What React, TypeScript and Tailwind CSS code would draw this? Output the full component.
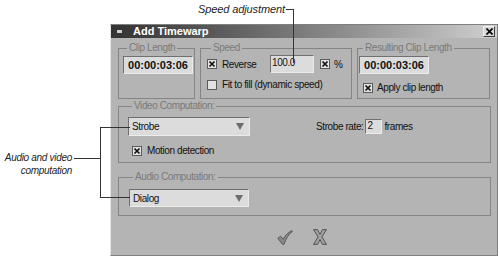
import type { ReactNode } from "react";

// Small pieces of the old-style dialog
function Check({ on }: { on?: boolean }) {
  return (
    <span className="flex h-[10px] w-[10px] shrink-0 items-center justify-center border border-[#5a5a5a] bg-[#e2e2e2]">
      {on && (
        <svg width="8" height="8" viewBox="0 0 8 8">
          <path d="M1.5 1.5L6.5 6.5M6.5 1.5L1.5 6.5" stroke="#111" strokeWidth="1.7" />
        </svg>
      )}
    </span>
  );
}

function Group({ title, className, children }: { title: string; className: string; children?: ReactNode }) {
  return (
    <fieldset className={"border border-[#858585] " + className}>
      <legend className="ml-[4px] px-[2px] text-[10px] leading-[12px] tracking-[-0.4px] text-[#7a7a7a]">
        {title}
      </legend>
      {children}
    </fieldset>
  );
}

function Box({ className, children }: { className: string; children?: ReactNode }) {
  return (
    <div
      className={
        "flex border border-t-[#707070] border-l-[#707070] border-b-[#ececec] border-r-[#ececec] bg-[#dcdcdc] " +
        className
      }
    >
      {children}
    </div>
  );
}

function Select({ value, className }: { value: string; className: string }) {
  return (
    <Box className={"items-center justify-between pl-[3px] pr-[5px] " + className}>
      <span>{value}</span>
      <svg width="8" height="7" viewBox="0 0 8 7">
        <path d="M0 0H8L4 7Z" fill="#6e6e6e" />
      </svg>
    </Box>
  );
}

export default function App() {
  return (
    <div className="relative h-[257px] w-[500px] overflow-hidden bg-white font-['Liberation_Sans',Arial,sans-serif]">
      {/* dialog */}
      <div className="ml-[110px] mt-[24px] flex h-[232px] w-[388px] flex-col border border-[#808080] border-l-[#e6e6e6] bg-[#b4b4b4]">
        {/* title bar */}
        <div className="flex h-[13px] items-center bg-gradient-to-r from-[#333333] to-[#d0d0d0] pl-[6px] pr-[2px]">
          <span className="h-[3px] w-[5px] bg-[#cfcfcf]" />
          <span className="ml-[11px] text-[11px] font-bold leading-none text-white">Add Timewarp</span>
          <span className="ml-auto flex h-[11px] w-[12px] items-center justify-center border border-t-[#f2f2f2] border-l-[#f2f2f2] border-b-[#3c3c3c] border-r-[#3c3c3c] bg-[#d6d6d6]">
            <svg width="7" height="7" viewBox="0 0 7 7">
              <path d="M0.5 0.5L6.5 6.5M6.5 0.5L0.5 6.5" stroke="#000" strokeWidth="1.6" />
            </svg>
          </span>
        </div>

        <div className="flex flex-col pl-[7px] text-[10px] tracking-[-0.4px] text-[#111]">
          {/* top row */}
          <div className="mt-[4px] flex gap-[5px]">
            <Group title="Clip Length" className="h-[57px] w-[77px] pl-[4px]">
              <Box className="mt-[2px] h-[18px] w-[70px] items-center justify-center">
                <span className="text-[11px] font-bold tracking-[0px]">00:00:03:06</span>
              </Box>
            </Group>

            <Group title="Speed" className="h-[57px] w-[152px] pl-[6px]">
              <div className="mt-[1px] flex h-[18px] items-center">
                <Check on />
                <span className="ml-[5px] w-[48px]">Reverse</span>
                <Box className="h-[18px] w-[44px] items-start pl-[1px]">
                  <span className="leading-[13px]">100.0</span>
                </Box>
                <span className="ml-[6px]">
                  <Check on />
                </span>
                <span className="ml-[4px]">%</span>
              </div>
              <div className="mt-[5px] flex h-[13px] items-center">
                <Check />
                <span className="ml-[5px]">Fit to fill (dynamic speed)</span>
              </div>
            </Group>

            <Group title="Resulting Clip Length" className="h-[57px] w-[133px] pl-[1px]">
              <Box className="mt-[2px] h-[18px] w-[70px] items-center justify-center">
                <span className="text-[11px] font-bold tracking-[0px]">00:00:03:06</span>
              </Box>
              <div className="mt-[7px] flex h-[13px] items-center pl-[4px]">
                <Check on />
                <span className="ml-[4px]">Apply clip length</span>
              </div>
            </Group>
          </div>

          {/* video */}
          <Group title="Video Computation:" className="mt-[1px] h-[63px] w-[373px] pl-[9px]">
            <div className="mt-[5px] flex items-center">
              <Select value="Strobe" className="h-[19px] w-[122px]" />
              <div className="ml-[66px] flex items-center">
                <span>Strobe rate:</span>
                <Box className="ml-[2px] h-[15px] w-[17px] items-start pl-[1px]">
                  <span className="leading-[12px]">2</span>
                </Box>
                <span className="ml-[2px]">frames</span>
              </div>
            </div>
            <div className="mt-[8px] flex h-[13px] items-center pl-[4px]">
              <Check on />
              <span className="ml-[5px]">Motion detection</span>
            </div>
          </Group>

          {/* audio */}
          <Group title="Audio Computation:" className="mt-[8px] h-[45px] w-[373px] pl-[10px]">
            <Select value="Dialog" className="mt-[6px] h-[18px] w-[120px]" />
          </Group>

          {/* ok / cancel */}
          <div className="mt-[13px] flex items-center gap-[20px] pl-[159px]">
            <svg width="16" height="15" viewBox="0 0 16 15">
              <path
                d="M0.8 8.2L3.6 6.2L6.2 9.2C8.2 5.6 10.8 2.6 14.8 0.6L15.4 1.6C11.8 4.2 9 8.2 7 14.2L5.6 14.4Z"
                fill="#8a8a8a"
                stroke="#474747"
                strokeWidth="0.8"
              />
            </svg>
            <svg width="14" height="16" viewBox="0 0 14 16">
              <path
                d="M0.6 0.6H4.4L7 5.4L9.6 0.6H13.4L8.9 7.9L13.4 15.4H9.6L7 10.6L4.4 15.4H0.6L5.1 7.9Z"
                fill="#a2a2a2"
                stroke="#474747"
                strokeWidth="0.9"
              />
            </svg>
          </div>
        </div>
      </div>

      {/* callout: speed adjustment */}
      <span className="absolute right-[215px] top-[3px] whitespace-nowrap text-[11px] italic leading-[13px] tracking-[-0.1px] text-[#1e1e1e]">
        Speed adjustment
      </span>
      <div className="absolute left-[286px] top-[9px] h-px w-[8px] bg-[#333]" />
      <div className="absolute left-[293px] top-[9px] h-[54px] w-px bg-[#333]" />

      {/* callout: audio and video computation */}
      <div className="absolute right-[428px] top-[151px] whitespace-nowrap text-right text-[10px] italic leading-[13px] tracking-[-0.3px] text-[#1e1e1e]">
        <div>Audio and video</div>
        <div>computation</div>
      </div>
      <div className="absolute left-[74px] top-[158px] h-px w-[26px] bg-[#333]" />
      <div className="absolute left-[100px] top-[127px] h-[71px] w-px bg-[#333]" />
      <div className="absolute left-[100px] top-[127px] h-px w-[30px] bg-[#333]" />
      <div className="absolute left-[100px] top-[197px] h-px w-[30px] bg-[#333]" />
    </div>
  );
}
